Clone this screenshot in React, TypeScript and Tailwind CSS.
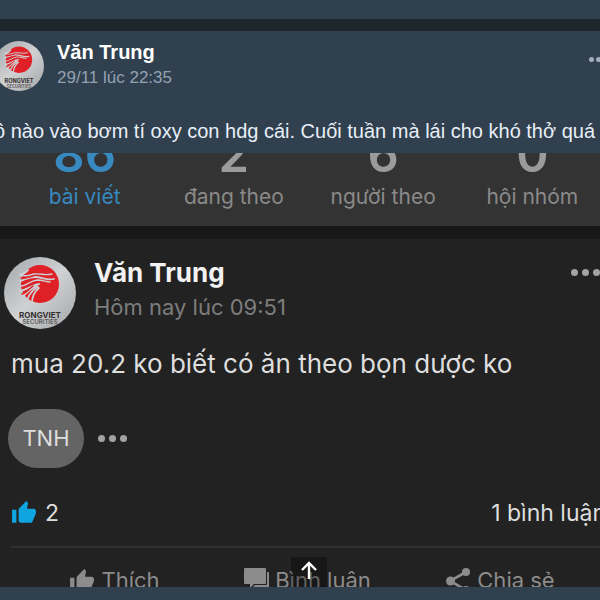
import React from 'react';
import { MdThumbUp } from 'react-icons/md';

const stats = [
  { value: '86', label: 'bài viết', active: true },
  { value: '2', label: 'đang theo', active: false },
  { value: '6', label: 'người theo', active: false },
  { value: '0', label: 'hội nhóm', active: false },
];

function Avatar({ className, id }: { className: string; id: string }) {
  return (
    <svg viewBox="0 0 72 72" className={`shrink-0 ${className}`} role="img" aria-label="Rong Viet Securities">
      <defs>
        <linearGradient id={id} x1="0" y1="0" x2="1" y2="1">
          <stop offset="0" stopColor="#a3a7aa" />
          <stop offset="0.5" stopColor="#cfd1d2" />
          <stop offset="1" stopColor="#a3a5a7" />
        </linearGradient>
      </defs>
      <circle cx="36" cy="36" r="36" fill={`url(#${id})`} />
      <ellipse cx="36" cy="27" rx="19" ry="19" fill="#df2027" />
      {/* dragon lines cut out of the red disc */}
      <g fill="none" stroke="#cdd0d2" strokeLinecap="round">
        <path d="M17 18c6 2 9 0 13-1 7-1 10 2 18 0" strokeWidth="1.4" />
        <path d="M16 24c5-1 8-4 15-4 8 0 11 4 19 2" strokeWidth="1.8" />
        <path d="M17 29c5 0 9-5 16-6 6 0 9 2 13 2" strokeWidth="1.4" />
        <path d="M16 34c7-1 11-6 19-7" strokeWidth="2" />
        <path d="M18 40c4-3 8-9 15-11" strokeWidth="2" />
        <path d="M23 43c2-5 5-10 11-13" strokeWidth="1.8" />
        <path d="M28 46c0-6 2-11 7-15" strokeWidth="1.8" />
        <path d="M24 13c-2 3-5 4-8 5" strokeWidth="2" />
      </g>
      {/* whiskers that reach past the disc */}
      <g fill="none" stroke="#df2027" strokeLinecap="round" strokeWidth="1.4">
        <path d="M17 21c4 1 8-1 12-2" />
        <path d="M18 31c4 0 8-3 12-5" />
        <path d="M18 37c4-1 7-5 11-8" />
      </g>
      <text x="36" y="61" textAnchor="middle" fontFamily="Inter, sans-serif" fontSize="8" fontWeight="700" fill="#33302f">
        RONGVIET
      </text>
      <text x="36" y="67" textAnchor="middle" fontFamily="Inter, sans-serif" fontSize="6" fontWeight="600" fill="#5d5a59">
        SECURITIES
      </text>
    </svg>
  );
}

function Dots({ className }: { className: string }) {
  return (
    <span className={`flex ${className}`}>
      <span className="size-full rounded-full bg-current" />
      <span className="size-full rounded-full bg-current" />
      <span className="size-full rounded-full bg-current" />
    </span>
  );
}

function CommentIcon() {
  return (
    <svg viewBox="0 0 25 24" className="w-[25px] h-6 shrink-0" fill="currentColor" aria-hidden="true">
      <path d="M1 0h20a1 1 0 0 1 1 1v14a1 1 0 0 1-1 1H10l-4 4v-4H1a1 1 0 0 1-1-1V1a1 1 0 0 1 1-1z" />
      <path d="M23 4h1a1 1 0 0 1 1 1v18l-4-4H9l2-2h11a1 1 0 0 0 1-1z" />
    </svg>
  );
}

function ShareIcon() {
  return (
    <svg viewBox="0 0 25 26" className="w-[25px] h-[26px] shrink-0" aria-hidden="true">
      <path d="M20 4 4 13l16 9" fill="none" stroke="currentColor" strokeWidth="2.6" />
      <g fill="currentColor">
        <circle cx="20" cy="4" r="4" />
        <circle cx="4.5" cy="13" r="4.5" />
        <circle cx="20" cy="22" r="4" />
      </g>
    </svg>
  );
}

// Screenshot of the older post, attached to the outer one
function SharedPost() {
  return (
    <div className="bg-[#222222] font-[Inter,sans-serif] overflow-hidden">
      <div className="bg-[#333333] border-b-[13px] border-[#181818] pl-[10px] overflow-hidden">
        <div className="grid grid-cols-4 -mr-[7px] text-center">
          {stats.map((stat) => (
            <div key={stat.label} className={`pb-4 ${stat.active ? 'text-[#3789c0]' : 'text-[#9b9b9b]'}`}>
              <div className="-mt-7 h-[59px] text-[49px] leading-[60px] font-semibold">{stat.value}</div>
              <div className={`text-[21px] leading-[26px] ${stat.active ? '' : 'text-[#8a8a8a]'}`}>{stat.label}</div>
            </div>
          ))}
        </div>
      </div>

      <div className="flex pl-1 pt-[18px]">
        <Avatar id="shared-avatar" className="size-[72px]" />
        <div className="ml-[18px] grow">
          <h3 className="text-[26px] leading-[32px] font-bold text-[#f2f2f2]">Văn Trung</h3>
          <p className="mt-[2px] text-[22px] leading-[32px] text-[#7d7d7d]">Hôm nay lúc 09:51</p>
        </div>
        <button type="button" aria-label="Tùy chọn" className="self-start pt-[12px] text-[#a3a3a3]">
          <Dots className="w-[29px] h-[7px] gap-1" />
        </button>
      </div>

      <p className="mt-[18px] pl-[11px] text-[26px] leading-[34px] text-[#dedede] whitespace-nowrap">
        mua 20.2 ko biết có ăn theo bọn dược ko
      </p>

      <div className="mt-7 pl-2 flex items-center">
        <a href="#tnh" className="w-[76px] h-[59px] rounded-full bg-[#646464] text-[#dedede] text-[22px] flex items-center justify-center">
          TNH
        </a>
        <button type="button" aria-label="Xem thêm" className="ml-[14px] text-[#a3a3a3]">
          <Dots className="w-[29px] h-[7px] gap-1" />
        </button>
      </div>

      <div className="mt-[28px] ml-[11px] pb-[16px] border-b-2 border-[#303030] flex items-center text-[#dedede] leading-[34px]">
        <MdThumbUp className="size-[26px] text-[#0ea5e0]" />
        <span className="ml-2 text-[23px]">2</span>
        <span className="ml-auto -mr-[6px] text-[23px] whitespace-nowrap">1 bình luận</span>
      </div>

      <div className="h-[39px] overflow-hidden pl-[18px] pr-[3px] grid grid-cols-3 items-start text-[22px] leading-[24px] text-[#8c8c8c]">
        <button type="button" className="pt-[20px] flex items-start justify-center gap-[6px] whitespace-nowrap">
          <MdThumbUp className="size-[26px] shrink-0" /> Thích
        </button>
        <button type="button" className="pt-[20px] flex items-start justify-center gap-[6px] whitespace-nowrap">
          <CommentIcon /> Bình luận
        </button>
        <button type="button" className="pt-[20px] flex items-start justify-center gap-[6px] whitespace-nowrap">
          <ShareIcon /> Chia sẻ
        </button>
      </div>
    </div>
  );
}

export default function App(): React.JSX.Element {
  return (
    <main className="min-h-screen bg-[#30404e] font-['Liberation_Sans',Arial,sans-serif] overflow-hidden">
      <div className="h-[31px] border-b-[12px] border-[#1e262b]" />

      <article>
        <header className="flex pt-[10px] -ml-[6px]">
          <Avatar id="post-avatar" className="size-[50px]" />
          <div className="ml-[13px] grow">
            <h2 className="text-[20px] leading-[22px] font-bold text-white">Văn Trung</h2>
            <time className="block text-[17px] leading-[30px] text-[#94a1b4]">29/11 lúc 22:35</time>
          </div>
          <button type="button" aria-label="Tùy chọn" className="self-start pt-[16px] -mr-[8px] text-[#a3afc0]">
            <Dots className="w-[19px] h-[5px] gap-[2px]" />
          </button>
        </header>

        <p className="mt-[26px] -ml-[6px] pb-[10px] text-[20px] leading-[24px] text-[#e8eff8] whitespace-nowrap">
          ô nào vào bơm tí oxy con hdg cái. Cuối tuần mà lái cho khó thở quá
        </p>

        <div className="relative">
          <SharedPost />
          <button
            type="button"
            aria-label="Lên đầu trang"
            className="absolute bottom-0 left-1/2 -ml-[9px] w-[36px] h-[30px] bg-black/30 text-white flex justify-center pt-[4px]"
          >
            <svg viewBox="0 0 18 20" className="w-[18px] h-5" fill="none" stroke="currentColor" strokeWidth="2.4" aria-hidden="true">
              <path d="M9 18V2M2 9l7-7 7 7" />
            </svg>
          </button>
        </div>
      </article>
    </main>
  );
}
